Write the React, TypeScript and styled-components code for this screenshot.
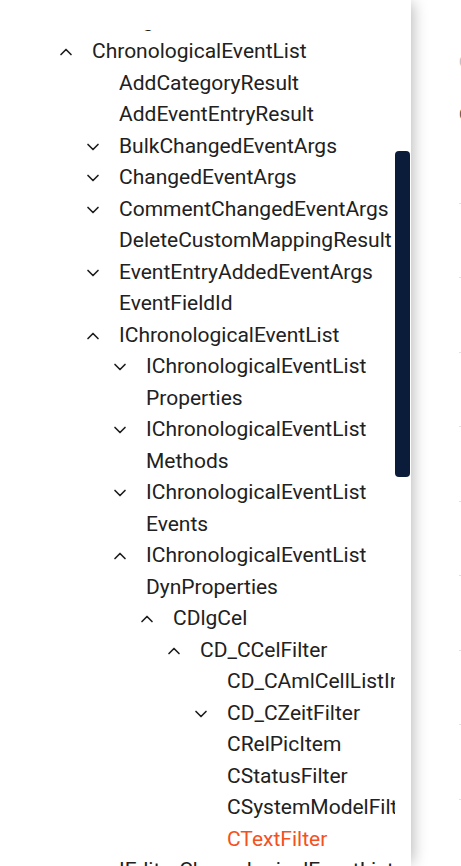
import React from 'react';
import styled, { createGlobalStyle } from 'styled-components';
import { ChevronUp, ChevronDown } from 'lucide-react';

const GlobalStyle = createGlobalStyle`
  html, body {
    margin: 0;
    padding: 0;
    height: 100%;
    overflow: hidden;
    background: #ffffff;
  }
  #root {
    height: 100%;
  }
`;

const Page = styled.div`
  display: flex;
  height: 100vh;
  font-family: Roboto, "Noto Sans", sans-serif;
  color: #212121;
  overflow: hidden;`;

const Sidebar = styled.aside`
  flex: none;
  width: 411px;
  min-width: 0;
  display: flex;
  flex-direction: column;
  background: #fff;
  position: relative;
  z-index: 2;
  box-shadow: 5px 0 14px -3px rgba(0, 0, 0, 0.28);`;

const SideHeader = styled.div`
  height: 30px;
  flex: none;`;

const SideBody = styled.div`
  flex: 1;
  display: flex;
  min-height: 0;`;

const TreeClip = styled.div`
  flex: 1;
  min-width: 0;
  overflow: hidden;`;

const Tree = styled.ul`
  list-style: none;
  margin: -25.25px 0 0 0;
  padding: 0;`;

const Row = styled.li<{ $level: number }>`
  display: flex;
  align-items: flex-start;
  padding-left: ${(p) => 56 + p.$level * 27}px;
  font-size: 21px;
  line-height: 31.5px;`;

const Toggle = styled.span`
  flex: 0 0 36px;
  height: 31.5px;
  display: flex;
  align-items: center;
  color: #1d1d1d;`;

const Label = styled.span<{ $active?: boolean }>`
  flex: 1;
  min-width: 0;
  overflow: hidden;
  color: ${(p) => (p.$active ? '#f4511e' : '#212121')};`;

const Track = styled.div`
  flex: 0 0 16px;
  padding-top: 121px;`;

const Thumb = styled.div`
  width: 15px;
  height: 326px;
  border-radius: 4px;
  background: #0b1b3a;`;

const Main = styled.main`
  flex: 1;
  min-width: 0;
  padding: 50px 0 0 48px;
  white-space: nowrap;`;

const Crumb = styled.div`
  font-size: 14px;
  line-height: 24px;
  color: #bdbdbd;`;

const Heading = styled.div`
  margin-top: 27px;
  font-size: 16px;
  line-height: 28px;
  color: #555;`;

const Line = styled.div`
  height: 74.5px;
  box-sizing: border-box;
  border-bottom: 1px solid #e2e2e2;`;

type Node = { label: string; level: number; toggle?: 'up' | 'down'; active?: boolean };

const nodes: Node[] = [
  { label: 'LogFile', level: 1 },
  { label: 'ChronologicalEventList', level: 0, toggle: 'up' },
  { label: 'AddCategoryResult', level: 1 },
  { label: 'AddEventEntryResult', level: 1 },
  { label: 'BulkChangedEventArgs', level: 1, toggle: 'down' },
  { label: 'ChangedEventArgs', level: 1, toggle: 'down' },
  { label: 'CommentChangedEventArgs', level: 1, toggle: 'down' },
  { label: 'DeleteCustomMappingResult', level: 1 },
  { label: 'EventEntryAddedEventArgs', level: 1, toggle: 'down' },
  { label: 'EventFieldId', level: 1 },
  { label: 'IChronologicalEventList', level: 1, toggle: 'up' },
  { label: 'IChronologicalEventList Properties', level: 2, toggle: 'down' },
  { label: 'IChronologicalEventList Methods', level: 2, toggle: 'down' },
  { label: 'IChronologicalEventList Events', level: 2, toggle: 'down' },
  { label: 'IChronologicalEventList DynProperties', level: 2, toggle: 'up' },
  { label: 'CDlgCel', level: 3, toggle: 'up' },
  { label: 'CD_CCelFilter', level: 4, toggle: 'up' },
  { label: 'CD_CAmlCellListInfo', level: 5 },
  { label: 'CD_CZeitFilter', level: 5, toggle: 'down' },
  { label: 'CRelPicItem', level: 5 },
  { label: 'CStatusFilter', level: 5 },
  { label: 'CSystemModelFilter', level: 5 },
  { label: 'CTextFilter', level: 5, active: true },
  { label: 'IEditorChronologicalEventList', level: 1, toggle: 'down' },
  { label: 'IEventList', level: 1, toggle: 'down' },
];

function App() {
  return (
    <Page>
      <GlobalStyle />
      <Sidebar>
        <SideHeader />
        <SideBody>
          <TreeClip>
            <Tree>
              {nodes.map((n, i) => (
                <Row key={i} $level={n.level}>
                  <Toggle>
                    {n.toggle === 'up' && <ChevronUp size={20} strokeWidth={2} />}
                    {n.toggle === 'down' && <ChevronDown size={20} strokeWidth={2} />}
                  </Toggle>
                  <Label $active={n.active}>{n.label}</Label>
                </Row>
              ))}
            </Tree>
          </TreeClip>
          <Track>
            <Thumb />
          </Track>
        </SideBody>
      </Sidebar>
      <Main>
        <Crumb>ChronologicalEventList</Crumb>
        <Heading>CTextFilter</Heading>
        {Array.from({ length: 10 }).map((_, i) => (
          <Line key={i} />
        ))}
      </Main>
    </Page>
  );
}

export default App;
